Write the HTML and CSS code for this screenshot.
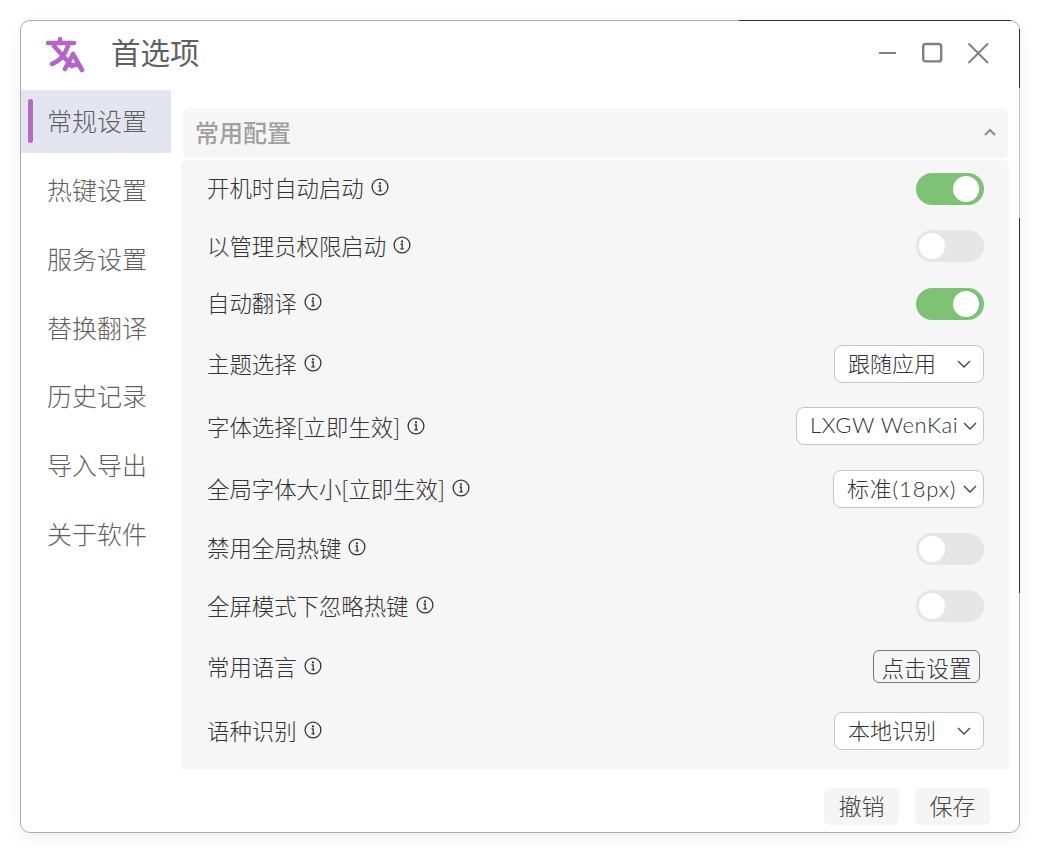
FILE: index.html
```html
<!DOCTYPE html>
<html lang="zh-CN">

<head>
    <meta charset="UTF-8">
    <title>首选项</title>
    <link rel="stylesheet" href="styles.css">
</head>

<body>

    <div class="window">
        <!-- Title bar -->
        <div class="titlebar">
            <svg class="logo" viewBox="0 0 40 40" fill="none" stroke="#b565c8" stroke-width="4.6" stroke-linecap="round" stroke-linejoin="round">
                <path d="M3 8H29M15 4V8M9 11L27 31M23 11C20 20 15 26 7 29M28 19L20 34M28 19L37 35M22 30H33"/>
            </svg>
            <span class="title">首选项</span>
            <div class="win-btns">
                <svg viewBox="0 0 24 24" fill="none" stroke="#808080" stroke-width="2"><path d="M5 12H22"/></svg>
                <svg viewBox="0 0 24 24" fill="none" stroke="#808080" stroke-width="2.4"><rect x="3.2" y="3" width="18" height="17.4" rx="2.5"/></svg>
                <svg viewBox="0 0 24 24" fill="none" stroke="#808080" stroke-width="2"><path d="M2.5 2.5L22 22M22 2.5L2.5 22"/></svg>
            </div>
        </div>

        <div class="main">
            <!-- Sidebar -->
            <div class="sidebar">
                <div class="nav-item active">常规设置</div>
                <div class="nav-item">热键设置</div>
                <div class="nav-item">服务设置</div>
                <div class="nav-item">替换翻译</div>
                <div class="nav-item">历史记录</div>
                <div class="nav-item">导入导出</div>
                <div class="nav-item">关于软件</div>
            </div>

            <!-- Settings -->
            <div class="content">
                <div class="section-head">
                    <span>常用配置</span>
                    <svg viewBox="0 0 12 8" fill="none" stroke="#8a8a8a" stroke-width="2"><path d="M1 7L6 2L11 7"/></svg>
                </div>
                <div class="section-body">
                    <div class="row row-switch">
                        <div class="label">开机时自动启动 <svg class="info" viewBox="0 0 18 18"><use href="#info"/></svg></div>
                        <div class="switch on"></div>
                    </div>
                    <div class="row row-switch">
                        <div class="label">以管理员权限启动 <svg class="info" viewBox="0 0 18 18"><use href="#info"/></svg></div>
                        <div class="switch"></div>
                    </div>
                    <div class="row row-switch">
                        <div class="label">自动翻译 <svg class="info" viewBox="0 0 18 18"><use href="#info"/></svg></div>
                        <div class="switch on"></div>
                    </div>
                    <div class="row row-select">
                        <div class="label">主题选择 <svg class="info" viewBox="0 0 18 18"><use href="#info"/></svg></div>
                        <div class="select narrow"><span>跟随应用</span><svg viewBox="0 0 14 8"><use href="#chev"/></svg></div>
                    </div>
                    <div class="row row-select">
                        <div class="label">字体选择[立即生效] <svg class="info" viewBox="0 0 18 18"><use href="#info"/></svg></div>
                        <div class="select font-select"><span>LXGW WenKai</span><svg viewBox="0 0 14 8"><use href="#chev"/></svg></div>
                    </div>
                    <div class="row row-select">
                        <div class="label">全局字体大小[立即生效] <svg class="info" viewBox="0 0 18 18"><use href="#info"/></svg></div>
                        <div class="select size-select"><span>标准(18px)</span><svg viewBox="0 0 14 8"><use href="#chev"/></svg></div>
                    </div>
                    <div class="row row-switch">
                        <div class="label">禁用全局热键 <svg class="info" viewBox="0 0 18 18"><use href="#info"/></svg></div>
                        <div class="switch"></div>
                    </div>
                    <div class="row row-switch">
                        <div class="label">全屏模式下忽略热键 <svg class="info" viewBox="0 0 18 18"><use href="#info"/></svg></div>
                        <div class="switch"></div>
                    </div>
                    <div class="row row-select">
                        <div class="label">常用语言 <svg class="info" viewBox="0 0 18 18"><use href="#info"/></svg></div>
                        <button class="set-btn">点击设置</button>
                    </div>
                    <div class="row row-last">
                        <div class="label">语种识别 <svg class="info" viewBox="0 0 18 18"><use href="#info"/></svg></div>
                        <div class="select narrow"><span>本地识别</span><svg viewBox="0 0 14 8"><use href="#chev"/></svg></div>
                    </div>
                </div>
                <div class="footer">
                    <button class="foot-btn">撤销</button>
                    <button class="foot-btn">保存</button>
                </div>
            </div>
        </div>
    </div>

    <!-- Shared icons -->
    <svg class="defs" width="0" height="0">
        <symbol id="info" viewBox="0 0 18 18">
            <circle cx="9" cy="9" r="7.9" fill="none" stroke="#333" stroke-width="1.3"/>
            <circle cx="9" cy="5.4" r="1.1" fill="#333"/>
            <path d="M7.6 8H9.2V12.6M7.4 12.8H10.8" fill="none" stroke="#333" stroke-width="1.3"/>
        </symbol>
        <symbol id="chev" viewBox="0 0 14 8">
            <path d="M1 1L7 7L13 1" fill="none" stroke="#444" stroke-width="1.4"/>
        </symbol>
    </svg>

</body>

</html>
```

FILE: styles.css
```css
* {
    margin: 0;
    padding: 0;
    box-sizing: border-box;
}

html, body {
    width: 100%;
    height: 100%;
    overflow: hidden;
    background-color: #ffffff;
    font-family: "Noto Sans CJK SC", "Lato", sans-serif;
    font-weight: 300;
}

body {
    padding: 20px;
}

.defs {
    position: absolute;
}

/* Window */
.window {
    position: relative;
    width: 1000px;
    height: 813px;
    background-color: #ffffff;
    border: 1px solid #adadad;
    border-radius: 10px;
    box-shadow: 0 4px 16px rgba(0, 0, 0, 0.07);
    display: flex;
    flex-direction: column;
}

/* Dark edges from whatever sits behind the window */
.window::before {
    content: "";
    position: absolute;
    top: -1px;
    left: 718px;
    right: 8px;
    height: 1px;
    background-color: #333;
}

.window::after {
    content: "";
    position: absolute;
    top: 8px;
    right: -1px;
    width: 1px;
    height: 564px;
    background: linear-gradient(#333 0, #333 59px, #c4c4c4 59px, #c4c4c4 189px, #333 189px, #333 100%);
}

/* Title bar */
.titlebar {
    height: 69px;
    flex-shrink: 0;
    display: flex;
    align-items: center;
    padding: 0 29px 6px 24px;
}

.logo {
    width: 40px;
    height: 40px;
    margin-top: 5px;
}

.title {
    margin-left: 26px;
    padding-bottom: 3px;
    font-size: 29.5px;
    font-weight: 400;
    color: #5f5f5f;
}

.win-btns {
    margin-left: auto;
    display: flex;
    gap: 22px;
    align-items: center;
}

.win-btns svg {
    width: 24px;
    height: 24px;
}

/* Main */
.main {
    flex: 1;
    display: flex;
    min-height: 0;
}

.sidebar {
    width: 150px;
    flex-shrink: 0;
    display: flex;
    flex-direction: column;
    gap: 6px;
}

.nav-item {
    position: relative;
    height: 62.75px;
    display: flex;
    align-items: center;
    padding: 0 0 2px 26px;
    font-size: 25px;
    color: #5f5f5f;
}

.nav-item.active {
    background-color: #e3e6f1;
}

.nav-item.active::before {
    content: "";
    position: absolute;
    left: 7px;
    top: 9px;
    width: 5px;
    height: 44px;
    border-radius: 3px;
    background-color: #b36cc4;
}

.content {
    flex: 1;
    min-width: 0;
    padding-left: 10px;
    display: flex;
    flex-direction: column;
}

/* Section */
.section-head {
    margin: 18px 11px 2px 2px;
    height: 50px;
    flex-shrink: 0;
    padding: 0 12px 3px;
    display: flex;
    align-items: center;
    justify-content: space-between;
    background-color: #f6f6f6;
    border-radius: 6px;
    font-size: 24px;
    font-weight: 500;
    color: #a0a0a0;
}

.section-head svg {
    width: 12px;
    height: 8px;
}

.section-body {
    margin-right: 10px;
    padding: 0 25px 0 26px;
    background-color: #f6f6f6;
    border-radius: 6px 6px 0 0;
    height: 609px;
    flex-shrink: 0;
}

.row {
    display: flex;
    align-items: center;
    justify-content: space-between;
}

.row-switch {
    height: 57.5px;
}

.row-select {
    height: 62.5px;
}

.row-last {
    height: 66px;
}

.label {
    display: flex;
    align-items: center;
    gap: 7px;
    padding-bottom: 3px;
    font-size: 22.4px;
    line-height: 30px;
    color: #333;
}

.row-select .label, .row-last .label {
    padding-bottom: 1px;
}

.info {
    width: 18px;
    height: 18px;
}

/* Switch */
.switch {
    position: relative;
    width: 68px;
    height: 32px;
    border-radius: 16px;
    background-color: #e6e6e6;
}

.switch::after {
    content: "";
    position: absolute;
    top: 3px;
    left: 3px;
    width: 26px;
    height: 26px;
    border-radius: 50%;
    background-color: #ffffff;
}

.switch.on {
    background-color: #7dc275;
}

.switch.on::after {
    left: 37px;
}

/* Select */
.select {
    height: 38px;
    display: flex;
    align-items: center;
    justify-content: space-between;
    padding: 0 6px 0 13px;
    background-color: #ffffff;
    border: 1px solid #c6c6c6;
    border-radius: 8px;
    font-size: 22px;
    color: #333;
}

.select span {
    padding-bottom: 3px;
    font-family: "Lato", "Noto Sans CJK SC", sans-serif;
    white-space: nowrap;
}

.select svg {
    width: 14px;
    height: 8px;
}

.select.narrow {
    width: 150px;
    padding-right: 12px;
}

.font-select {
    width: 188px;
}

.font-select span {
    letter-spacing: 0.6px;
}

.size-select {
    width: 151px;
}

.size-select span {
    letter-spacing: 0.8px;
}

.set-btn {
    width: 107px;
    height: 33px;
    margin-right: 4px;
    padding-bottom: 2px;
    background: transparent;
    border: 1px solid #777;
    border-radius: 6px;
    font-family: inherit;
    font-weight: 300;
    font-size: 22.4px;
    color: #333;
}

/* Footer */
.footer {
    flex: 1;
    display: flex;
    justify-content: flex-end;
    gap: 16px;
    padding: 19px 29px 0 0;
}

.foot-btn {
    width: 75px;
    height: 37px;
    padding-bottom: 4px;
    background-color: #f5f5f5;
    border: none;
    border-radius: 6px;
    font-family: inherit;
    font-weight: 300;
    font-size: 23px;
    color: #444;
}
```
